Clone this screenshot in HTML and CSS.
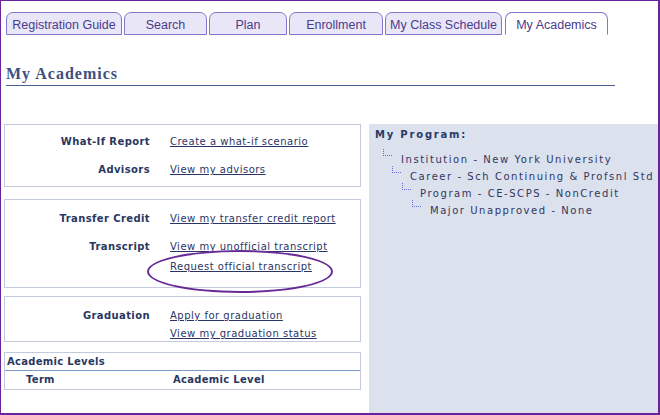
FILE: index.html
```html
<!DOCTYPE html>
<html lang="en">
<head>
    <meta charset="UTF-8">
    <title>My Academics</title>
    <link rel="stylesheet" href="styles.css">
</head>
<body>
    <div class="frame">
        <div class="tabs">
            <div class="tab tab-guide">Registration Guide</div>
            <div class="tab tab-search">Search</div>
            <div class="tab tab-plan">Plan</div>
            <div class="tab tab-enroll">Enrollment</div>
            <div class="tab tab-sched">My Class Schedule</div>
            <div class="tab tab-acad active">My Academics</div>
        </div>

        <h1 class="page-title">My Academics</h1>

        <div class="content">
            <div class="left-col">
                <div class="box box-one">
                    <div class="row">
                        <div class="label">What-If Report</div>
                        <div class="links"><a href="#">Create a what-if scenario</a></div>
                    </div>
                    <div class="row">
                        <div class="label">Advisors</div>
                        <div class="links"><a href="#">View my advisors</a></div>
                    </div>
                </div>

                <div class="box box-two">
                    <div class="row">
                        <div class="label">Transfer Credit</div>
                        <div class="links"><a href="#">View my transfer credit report</a></div>
                    </div>
                    <div class="row">
                        <div class="label">Transcript</div>
                        <div class="links">
                            <a href="#">View my unofficial transcript</a>
                            <a href="#">Request official transcript</a>
                        </div>
                    </div>
                    <div class="circle-mark"></div>
                </div>

                <div class="box box-three">
                    <div class="row">
                        <div class="label">Graduation</div>
                        <div class="links">
                            <a href="#">Apply for graduation</a>
                            <a href="#">View my graduation status</a>
                        </div>
                    </div>
                </div>

                <div class="box levels">
                    <div class="levels-head">Academic Levels</div>
                    <div class="levels-cols">
                        <span class="col-term">Term</span>
                        <span class="col-level">Academic Level</span>
                    </div>
                </div>
            </div>

            <div class="program">
                <div class="program-title">My Program:</div>
                <div class="tree-row lvl-1"><span class="elbow"></span>Institution - New York University</div>
                <div class="tree-row lvl-2"><span class="elbow"></span>Career - Sch Continuing &amp; Profsnl Std</div>
                <div class="tree-row lvl-3"><span class="elbow"></span>Program - CE-SCPS - NonCredit</div>
                <div class="tree-row lvl-4"><span class="elbow"></span>Major Unapproved - None</div>
            </div>
        </div>
    </div>
</body>
</html>
```

FILE: styles.css
```css
body {
    margin: 0;
    font-family: "DejaVu Sans", Verdana, sans-serif;
    background: #fff;
}

.frame {
    width: 660px;
    height: 415px;
    box-sizing: border-box;
    border: solid #6b2399;
    border-width: 1px 2px 2px 1px;
    display: flex;
    flex-direction: column;
}

/* tab strip */
.tabs {
    display: flex;
    gap: 2px;
    margin-top: 11px;
    padding-left: 5px;
}
.tab {
    height: 21px;
    line-height: 25px;
    background: #e9e7f7;
    border: 1px solid #8078cc;
    border-radius: 7px 7px 0 0;
    color: #4a3b8e;
    font-family: "Liberation Sans", Arial, sans-serif;
    font-size: 12.5px;
    text-align: center;
    overflow: hidden;
}
.tab.active {
    background: #fff;
    border-bottom-color: #fff;
    margin-left: 1px;
}
.tab-guide { width: 114px; }
.tab-search { width: 81px; }
.tab-plan { width: 76px; }
.tab-enroll { width: 92px; }
.tab-sched { width: 115px; }
.tab-acad { width: 101px; }

.page-title {
    margin: 29px 0 0 5px;
    width: 609px;
    padding-bottom: 1px;
    border-bottom: 1px solid #4a5e8e;
    font-family: "Liberation Serif", Georgia, serif;
    font-size: 16px;
    letter-spacing: 1px;
    line-height: 20px;
    color: #3f4f7f;
}

.content {
    flex: 1;
    display: flex;
    gap: 8px;
    margin-top: 38px;
}

.left-col {
    width: 357px;
    margin-left: 3px;
}

.box {
    position: relative;
    border: 1px solid #c3c9de;
}
.box-one {
    padding: 10px 0 9px;
}
.box-two {
    margin-top: 12px;
    padding: 12px 0 13px;
}
.box-three {
    margin-top: 8px;
    padding: 12px 0 0;
}
.box-one .row + .row,
.box-two .row + .row {
    margin-top: 14px;
}

.row {
    display: grid;
    grid-template-columns: 145px 1fr;
    column-gap: 20px;
    font-size: 10px;
    line-height: 14px;
}
.label {
    text-align: right;
    font-weight: bold;
    letter-spacing: 0.4px;
    color: #2a375f;
}
.links {
    display: flex;
    flex-direction: column;
    gap: 6px;
}
.box-three .links {
    gap: 4px;
}
.links a {
    color: #2a3566;
    letter-spacing: 0.5px;
}

.circle-mark {
    position: absolute;
    left: 142px;
    top: 50px;
    width: 182px;
    height: 39px;
    border: 2px solid #6a2a96;
    border-radius: 50%;
}

.levels {
    margin-top: 10px;
    height: 36px;
    font-size: 10px;
    font-weight: bold;
    letter-spacing: 0.3px;
    color: #2a375f;
}
.levels-head {
    line-height: 14px;
    margin-top: 2px;
    padding-left: 2px;
    padding-bottom: 1px;
    border-bottom: 1px solid #7c98c6;
}
.levels-cols {
    display: flex;
    line-height: 14px;
    margin-top: 2px;
}
.col-term {
    width: 168px;
    padding-left: 21px;
    box-sizing: border-box;
}

/* My Program panel */
.program {
    flex: 1;
    background: #dbe1ed;
    padding-top: 4px;
    color: #33365f;
    font-size: 10px;
}
.program-title {
    font-weight: bold;
    letter-spacing: 1.8px;
    color: #283a6a;
    padding-left: 6px;
    line-height: 14px;
}
.tree-row {
    display: flex;
    align-items: flex-start;
    line-height: 17px;
    letter-spacing: 1.55px;
}
.elbow {
    width: 9px;
    height: 7px;
    margin-top: -2px;
    margin-right: 9px;
    border-left: 1px dotted #6b6bd6;
    border-bottom: 1px dotted #6b6bd6;
    box-sizing: border-box;
}
.lvl-1 { padding-left: 14px; margin-top: 9px; }
.lvl-2 { padding-left: 23px; }
.lvl-3 { padding-left: 33px; }
.lvl-4 { padding-left: 43px; }
```
